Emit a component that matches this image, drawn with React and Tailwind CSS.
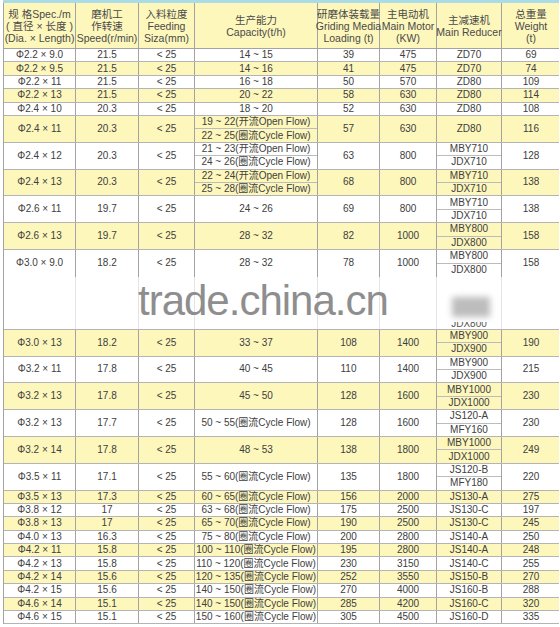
import React from 'react';

const cols = ['w-[72px]', 'w-[63px]', 'w-[56px]', 'w-[123px]', 'w-[62px]', 'w-[57px]', 'w-[65px]', 'w-[58px]'];

const head = [
  ['规 格Spec./m', '( 直径 × 长度 )', '(Dia. × Length)'],
  ['磨机工', '作转速', 'Speed(r/min)'],
  ['入料粒度', 'Feeding', 'Siza(mm)'],
  ['生产能力', 'Capacity(t/h)'],
  ['研磨体装载量', 'Griding Media', 'Loading (t)'],
  ['主电动机', 'Main Motor', '(KW)'],
  ['主减速机', 'Main Reducer'],
  ['总重量', 'Weight', '(t)'],
];

const LT = '< 25';
const OF = (a) => `${a}(开流Open Flow)`;
const CF = (a) => `${a}(圈流Cycle Flow)`;

// [cells, tall]
const top = [
  [['Φ2.2 × 9.0', '21.5', LT, '14 ~ 15', '39', '475', 'ZD70', '69'], false],
  [['Φ2.2 × 9.5', '21.5', LT, '14 ~ 16', '41', '475', 'ZD70', '74'], false],
  [['Φ2.2 × 11', '21.5', LT, '16 ~ 18', '50', '570', 'ZD80', '109'], false],
  [['Φ2.2 × 13', '21.5', LT, '20 ~ 22', '58', '630', 'ZD80', '114'], false],
  [['Φ2.4 × 10', '20.3', LT, '18 ~ 20', '52', '630', 'ZD80', '108'], false],
  [['Φ2.4 × 11', '20.3', LT, [OF('19 ~ 22'), CF('22 ~ 25')], '57', '630', 'ZD80', '116'], true],
  [['Φ2.4 × 12', '20.3', LT, [OF('21 ~ 23'), CF('24 ~ 26')], '63', '800', ['MBY710', 'JDX710'], '128'], true],
  [['Φ2.4 × 13', '20.3', LT, [OF('22 ~ 24'), CF('25 ~ 28')], '68', '800', ['MBY710', 'JDX710'], '138'], true],
  [['Φ2.6 × 11', '19.7', LT, '24 ~ 26', '69', '800', ['MBY710', 'JDX710'], '138'], true],
  [['Φ2.6 × 13', '19.7', LT, '28 ~ 32', '82', '1000', ['MBY800', 'JDX800'], '158'], true],
  [['Φ3.0 × 9.0', '18.2', LT, '28 ~ 32', '78', '1000', ['MBY800', 'JDX800'], '158'], true],
];

const mid = [
  [['Φ3.0 × 13', '18.2', LT, '33 ~ 37', '108', '1400', ['MBY900', 'JDX900'], '190'], true],
  [['Φ3.2 × 11', '17.8', LT, '40 ~ 45', '110', '1400', ['MBY900', 'JDX900'], '215'], true],
  [['Φ3.2 × 13', '17.8', LT, '45 ~ 50', '128', '1600', ['MBY1000', 'JDX1000'], '230'], true],
  [['Φ3.2 × 13', '17.7', LT, CF('50 ~ 55'), '128', '1600', ['JS120-A', 'MFY160'], '230'], true],
  [['Φ3.2 × 14', '17.8', LT, '48 ~ 53', '138', '1800', ['MBY1000', 'JDX1000'], '249'], true],
  [['Φ3.5 × 11', '17.1', LT, CF('55 ~ 60'), '135', '1800', ['JS120-B', 'MFY180'], '220'], true],
  [['Φ3.5 × 13', '17.3', LT, CF('60 ~ 65'), '156', '2000', 'JS130-A', '275'], false],
  [['Φ3.8 × 12', '17', LT, CF('63 ~ 68'), '175', '2500', 'JS130-C', '197'], false],
  [['Φ3.8 × 13', '17', LT, CF('65 ~ 70'), '190', '2500', 'JS130-C', '245'], false],
  [['Φ4.0 × 13', '16.3', LT, CF('75 ~ 80'), '200', '2800', 'JS140-A', '250'], false],
  [['Φ4.2 × 11', '15.8', LT, CF('100 ~ 110'), '195', '2800', 'JS140-A', '248'], false],
  [['Φ4.2 × 13', '15.8', LT, CF('110 ~ 120'), '230', '3150', 'JS140-C', '255'], false],
  [['Φ4.2 × 14', '15.6', LT, CF('120 ~ 135'), '252', '3550', 'JS150-B', '270'], false],
  [['Φ4.2 × 15', '15.6', LT, CF('140 ~ 150'), '270', '4000', 'JS160-B', '288'], false],
  [['Φ4.6 × 14', '15.1', LT, CF('140 ~ 150'), '285', '4200', 'JS160-C', '320'], false],
  [['Φ4.6 × 15', '15.1', LT, CF('150 ~ 160'), '305', '4500', 'JS160-D', '335'], false],
];

function Row({ cells, tall, yellow, last }) {
  return (
    <div
      className={`flex ${tall ? 'h-[26.8px]' : 'h-[13.4px]'} ${yellow ? 'bg-[#fdf7bc]' : 'bg-white'} ${last ? 'border-b-0' : 'border-b'} border-[#b4b4b4]`}
    >
      {cells.map((c, i) => (
        <div
          key={i}
          className={`${cols[i]} shrink-0 ${i < 7 ? 'border-r' : ''} border-[#a3a3a3] flex flex-col`}
        >
          {Array.isArray(c) ? (
            <>
              <div className="flex-1 flex items-center justify-center border-b border-[#bcbcbc] leading-none">{c[0]}</div>
              <div className="flex-1 flex items-center justify-center leading-none">{c[1]}</div>
            </>
          ) : (
            <div className="flex-1 flex items-center justify-center leading-none whitespace-nowrap">{c}</div>
          )}
        </div>
      ))}
    </div>
  );
}

export default function App() {
  return (
    <div
      className="w-[560px] h-[627px] bg-white pl-[3px] pr-[1px] text-[10px] text-[#404040]"
      style={{ fontFamily: '"Liberation Sans", "Noto Sans CJK SC", sans-serif' }}
    >
      <div className="h-[3px] bg-[#a9dce6]" />
      <div className="border-l border-[#a3a3a3]">
        {/* header */}
        <div className="flex h-[46px] bg-[#fdf7bc] border-b border-[#a3a3a3]">
          {head.map((lines, i) => (
            <div
              key={i}
              className={`${cols[i]} shrink-0 ${i < 7 ? 'border-r' : ''} border-[#a3a3a3] flex flex-col items-center justify-center text-[10.5px] leading-[12px] text-[#4a4a4a] whitespace-nowrap`}
            >
              {lines.map((l) => (
                <div key={l}>{l}</div>
              ))}
            </div>
          ))}
        </div>

        {top.map(([cells, tall], i) => (
          <Row key={i} cells={cells} tall={tall} yellow={i % 2 === 1} last={i === top.length - 1} />
        ))}

        {/* watermark band */}
        <div className="relative flex h-[52px] bg-white">
          {cols.map((w, i) => (
            <div key={i} className={`${w} shrink-0 ${i < 7 ? 'border-r' : ''} border-[#e3e3e3] flex items-end justify-center`}>
              {i === 6 && (
                <div className="h-[7px] overflow-hidden">
                  <div className="-mt-[3px] leading-[10px] text-[#555]">JDX800</div>
                </div>
              )}
            </div>
          ))}
          <div className="absolute left-[134px] top-[3px] text-[42px] leading-none tracking-[-1px] text-[#8e8e8e]">
            trade.china.cn
          </div>
          <div className="absolute left-[448px] top-[20px] w-[38px] h-[20px] bg-[#bdbdbd] blur-[3px]" />
        </div>

        <div className="border-t border-[#b4b4b4]">
          {mid.map(([cells, tall], i) => (
            <Row key={i} cells={cells} tall={tall} yellow={i % 2 === 0} />
          ))}
        </div>
      </div>
    </div>
  );
}
